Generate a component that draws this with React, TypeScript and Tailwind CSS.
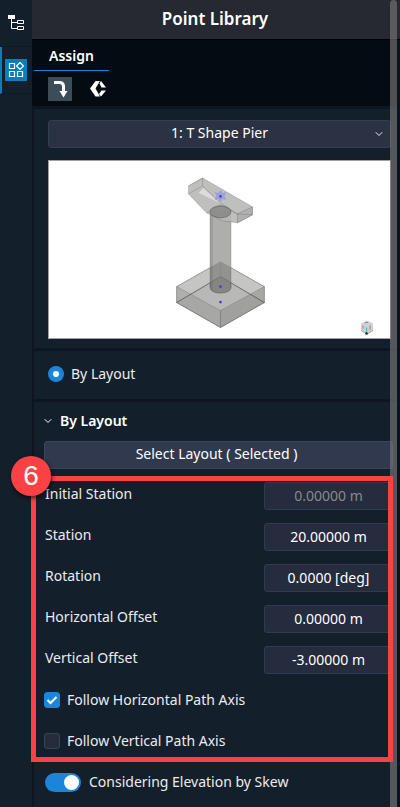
import React, { useState } from "react";
import { ChevronDown } from "lucide-react";

interface StationField {
  id: string;
  label: string;
  value: string;
  disabled?: boolean;
}

const FIELDS: StationField[] = [
  { id: "initial-station", label: "Initial Station", value: "0.00000 m", disabled: true },
  { id: "station", label: "Station", value: "20.00000 m" },
  { id: "rotation", label: "Rotation", value: "0.0000 [deg]" },
  { id: "horizontal-offset", label: "Horizontal Offset", value: "0.00000 m" },
  { id: "vertical-offset", label: "Vertical Offset", value: "-3.00000 m" },
];

const TreeIcon = () => (
  <svg width="16" height="16" viewBox="0 0 16 16" fill="none" stroke="#fff">
    <path d="M0 0h7v4H0z" fill="#fff" stroke="none" />
    <path d="M3.5 4v9.5H9M3.5 7.5H9M9.5 5.5h6v3h-6zM9.5 11.5h6v3h-6z" />
  </svg>
);

const LibraryIcon = () => (
  <svg width="16" height="16" viewBox="0 0 16 16" fill="none" stroke="#fff" strokeWidth="1.2">
    <path d="M1.5 1.5h5v5h-5zM1.5 9.5h5v5h-5zM9.5 9.5h5v5h-5zM12 .5L15.5 4 12 7.5 8.5 4z" />
  </svg>
);

const AssignIcon = () => (
  <svg width="24" height="24" viewBox="0 0 24 24" fill="none">
    <path d="M6 5.5h5.5q4 0 4 4V15" stroke="#fff" strokeWidth="3" />
    <path d="M11.5 14h8l-4 6.500z" fill="#fff" />
  </svg>
);

const ReplaceIcon = () => (
  <svg width="24" height="24" viewBox="0 0 24 24" fill="#fff">
    <path d="M9.500 4h4.500l-4.500 7.500 4.500 8H9.500L4 11.500z" />
    <path d="M13.500 6.500L15 4l5 6.500h-4.500zM15.500 13.500H20l-5 6-2-2.500z" />
  </svg>
);

const PierModel = () => (
  <svg
    className="block w-full border border-[#a0a0a0] bg-white"
    viewBox="48 160 342 178"
    role="img"
    aria-label="T shape pier model"
  >
    <g stroke="#555" strokeOpacity=".35" strokeWidth=".8" strokeLinejoin="round">
      {/* footing */}
      <path d="M220 261l44 25v16l-44 25-44-25v-16z" fill="#c5c5c3" />
      <path d="M176 286l44 24v17l-44-25z" fill="#999" fillOpacity=".5" />
      <path d="M264 286l-44 24v17l44-25z" fill="#929292" fillOpacity=".6" />
      <path d="M176 302l44-26 44 26-44 25z" fill="#888" fillOpacity=".2" />
      <path d="M176 286l44-25 44 25" fill="none" />
      <path d="M176 302l44-26 44 26M220 261v15" fill="none" strokeOpacity=".8" />
      {/* column */}
      <path d="M209.500 211v76a10.500 5.500 0 0 0 21 0v-76z" fill="#a0a09e" fillOpacity=".85" />
      <path d="M209.500 211h3v79l-3-3z" fill="#666" fillOpacity=".2" stroke="none" />
      <path d="M209.500 267l10.500-6 10.500 6v20a10.500 5.500 0 0 1-21 0z" fill="#444" fillOpacity=".2" stroke="none" />
      <path d="M209.500 282l10.500-6 10.500 6v5a10.500 5.500 0 0 1-21 0z" fill="#444" fillOpacity=".15" />
      {/* pier cap */}
      <path d="M202 177l50 29v8l-15 8-15-2-16-8-18-19v-8z" fill="#b8b8b6" fillOpacity=".9" />
      <path d="M203 187l16 15-21-10z" fill="#fff" fillOpacity=".45" stroke="none" />
      <path d="M188 193l14-8 18 17 16 11 16 1M202 177v8" fill="none" />
      <path d="M237 213l15-7v8l-15 8zM188 185l14-8" fill="#777" fillOpacity=".2" />
      <path d="M206 212l14-8 17 9" fill="none" />
      <ellipse cx="220" cy="211" rx="10.500" ry="6" fill="#808080" fillOpacity=".75" strokeOpacity=".7" />
    </g>
    <path
      d="M220 189l2 3 4-1-2 4 2 4-4-1-2 3-2-3-4 1 2-4-2-4 4 1z"
      fill="#8790e8"
      fillOpacity=".65"
    />
    <g fill="#4040d8">
      <circle cx="220" cy="195.500" r="1.300" />
      <circle cx="220" cy="286" r="1.400" />
      <circle cx="220" cy="301.500" r="1.400" />
    </g>
    {/* view cube */}
    <path d="M367 320l6 3v7l-6 4-6-4v-7z" fill="#d0d0d0" />
    <path d="M363 325v3M370 325v4M365 322h3" fill="none" stroke="#888" />
    <path d="M366.500 327v6" stroke="#42b5d5" />
    <path d="M361 330l5 3" stroke="#7bc77b" />
    <path d="M373 330l-5 3" stroke="#e58a8a" />
    <circle cx="366.500" cy="333" r="1.300" fill="#222" />
  </svg>
);

interface CheckRowProps {
  label: string;
  checked: boolean;
  onChange: (checked: boolean) => void;
}

const CheckRow: React.FC<CheckRowProps> = ({ label, checked, onChange }) => (
  <label className="flex h-6 items-center gap-[7px]">
    <span className="grid size-4 place-items-center">
      <input
        type="checkbox"
        checked={checked}
        onChange={(e) => onChange(e.target.checked)}
        className="col-start-1 row-start-1 size-4 appearance-none rounded-[3px] border border-[#3a4257] bg-[#252c3c] checked:border-[#1b85d9] checked:bg-[#1b85d9]"
      />
      {checked && (
        <svg className="pointer-events-none col-start-1 row-start-1" width="12" height="12" viewBox="0 0 12 12">
          <path d="M1.500 6l3 3 6-6" fill="none" stroke="#fff" strokeWidth="2" />
        </svg>
      )}
    </span>
    {label}
  </label>
);

export default function App() {
  const [values, setValues] = useState(FIELDS.map((field) => field.value));
  const [followHorizontal, setFollowHorizontal] = useState(true);
  const [followVertical, setFollowVertical] = useState(false);
  const [skew, setSkew] = useState(true);

  const updateValue = (index: number, value: string) => {
    setValues(values.map((v, i) => (i === index ? value : v)));
  };

  return (
    <div className="relative flex min-h-screen bg-[#141f2c] font-['Noto_Sans',sans-serif] text-sm text-[#ececec]">
      <nav className="w-8 shrink-0">
        <button aria-label="Tree" className="flex h-[47px] w-full items-center justify-center border-b border-[#101925]">
          <TreeIcon />
        </button>
        <button
          aria-label="Library"
          className="flex h-[47px] w-full items-center border-b border-l-2 border-b-[#101925] border-l-[#0b7dba] pl-[3px]"
        >
          <span className="flex size-[22px] items-center justify-center bg-[#0b7dba]">
            <LibraryIcon />
          </span>
        </button>
      </nav>

      <main className="min-w-0 flex-1 border-l-2 border-[#0d1620]">
        <h1 className="-ml-0.5 flex h-10 items-center justify-center border-b border-black bg-[#262932] pr-0.5 text-[17px] font-semibold text-white">
          Point Library
        </h1>

        <div className="-ml-0.5 h-[66px] bg-[#040b12] pl-0.5">
          <button className="flex h-[31px] w-[75px] items-center justify-center border-b border-[#1b85d9] pt-0.5 font-semibold text-white">
            Assign
          </button>
          <div className="flex gap-[14px] pt-1.5 pl-[14px]">
            <button aria-label="Assign point" className="size-6 bg-[#3c4d57]">
              <AssignIcon />
            </button>
            <button aria-label="Replace point" className="size-6">
              <ReplaceIcon />
            </button>
          </div>
        </div>

        <section className="border-y-[3px] border-[#0d1620] pt-[11px] pr-[9px] pb-[9px] pl-[14px]">
          <div className="mb-3 grid items-center">
            <select
              aria-label="Pier type"
              className="col-start-1 row-start-1 h-7 w-full appearance-none rounded-[3px] border border-[#343e50] bg-[#2a3243] pb-0.5 text-center text-white"
            >
              <option>1: T Shape Pier</option>
            </select>
            <ChevronDown
              size={12}
              strokeWidth={2}
              className="pointer-events-none col-start-1 row-start-1 mr-1.5 justify-self-end"
            />
          </div>
          <PierModel />
        </section>

        <section className="border-b-[3px] border-[#0d1620] pt-[11px] pb-[13px] pl-[14px]">
          <label className="flex h-6 items-center gap-[7px]">
            <input
              type="radio"
              name="placement"
              defaultChecked
              className="size-4 appearance-none rounded-full border-5 border-[#1b85d9] bg-white"
            />
            By Layout
          </label>
        </section>

        <section className="pt-[7px] pr-[7px] pb-3 pl-[10px]">
          <button className="flex h-6 items-center gap-1.5 font-semibold text-white">
            <ChevronDown size={12} strokeWidth={2} className="-ml-0.5" />
            By Layout
          </button>
          <button className="mt-2 block h-7 w-full rounded-[3px] border border-[#3b455c] bg-[#30394d] pr-1 pb-0.5 text-white">
            Select Layout ( Selected )
          </button>

          <div className="relative mt-[13px]">
            <div className="space-y-[13px]">
              {FIELDS.map((field, index) => (
                <div key={field.id} className="flex items-start justify-between">
                  <label htmlFor={field.id} className="pl-px leading-6">
                    {field.label}
                  </label>
                  <input
                    id={field.id}
                    value={values[index]}
                    disabled={field.disabled}
                    onChange={(e) => updateValue(index, e.target.value)}
                    className="h-7 w-[129px] rounded-[3px] border border-[#313b4d] bg-[#242c3d] pb-0.5 text-center text-white disabled:text-[#858a91]"
                  />
                </div>
              ))}
            </div>
            <div className="mt-[14px] space-y-[17px]">
              <CheckRow
                label="Follow Horizontal Path Axis"
                checked={followHorizontal}
                onChange={setFollowHorizontal}
              />
              <CheckRow
                label="Follow Vertical Path Axis"
                checked={followVertical}
                onChange={setFollowVertical}
              />
            </div>

            {/* step callout */}
            <div className="pointer-events-none absolute -top-1.5 right-0 -bottom-[9px] -left-[13px] z-20 border-5 border-[#fb4144]">
              <span className="absolute -top-[25px] -left-[25px] flex size-10 items-center justify-center rounded-full bg-[#fb4144] font-['Liberation_Sans',sans-serif] text-[28px] text-white shadow-[1px_2px_4px_rgba(0,0,0,0.7)]">
                6
              </span>
            </div>
          </div>

          <label className="mt-[17px] flex h-6 items-center gap-2">
            <input
              type="checkbox"
              role="switch"
              checked={skew}
              onChange={(e) => setSkew(e.target.checked)}
              className="ml-px flex h-[19px] w-9 appearance-none items-center rounded-full bg-[#3a4257] px-0.5 before:size-[15px] before:rounded-full before:bg-white checked:justify-end checked:bg-[#1b85d9]"
            />
            Considering Elevation by Skew
          </label>
        </section>
      </main>

      <div className="pointer-events-none absolute inset-y-0 right-[3px] z-10 w-[7px] rounded-t-sm bg-[#777]/65" />
      <div className="pointer-events-none absolute top-10 right-0 bottom-0 w-[3px] bg-[#0b131d]" />
    </div>
  );
}
